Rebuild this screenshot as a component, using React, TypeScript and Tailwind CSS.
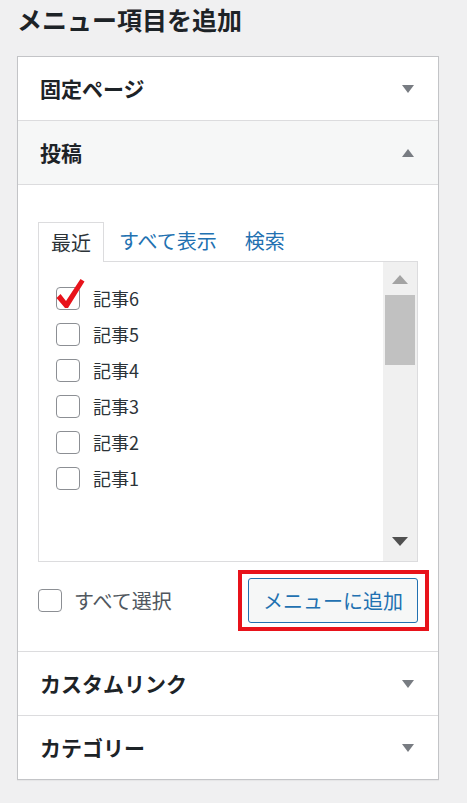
const jp = { fontFamily: '"Noto Sans CJK JP", "Noto Sans", sans-serif' };

const posts = ["記事6", "記事5", "記事4", "記事3", "記事2", "記事1"];

function Caret({ up = false }: { up?: boolean }) {
  return (
    <svg width="12" height="8" viewBox="0 0 12 8" aria-hidden="true">
      <path d={up ? "M0 8 L6 0 L12 8 Z" : "M0 0 L12 0 L6 8 Z"} fill="#787c82" />
    </svg>
  );
}

function SectionRow({ title, open = false }: { title: string; open?: boolean }) {
  return (
    <div
      className={`flex h-[64px] items-center justify-between border-b border-[#dcdcde] pl-[22px] pr-[24px] ${
        open ? "bg-[#f6f7f7]" : "bg-white"
      }`}
    >
      <span className="text-[21px] font-bold leading-none text-[#1d2327]">{title}</span>
      <Caret up={open} />
    </div>
  );
}

function Box() {
  return <span className="block h-[23px] w-[24px] shrink-0 rounded-[4px] border border-[#8c8f94] bg-white" />;
}

function RedCheck() {
  return (
    <svg
      className="absolute left-0 top-[-10px]"
      width="30"
      height="32"
      viewBox="0 0 30 32"
      aria-hidden="true"
    >
      <path d="M0.5 21 L4.5 17 L10 24 L24.5 2 L28.5 4.5 L12 31 L9 31 Z" fill="#e8131b" />
    </svg>
  );
}

export default function App() {
  return (
    <div className="min-h-screen bg-[#f0f0f1] px-[17px] pt-[6px]" style={jp}>
      <h2 className="text-[25px] font-bold leading-[26px] text-[#1d2327]">メニュー項目を追加</h2>

      <div className="mt-[24px] w-[422px] border border-[#c3c4c7] bg-white shadow-[0_1px_1px_rgba(0,0,0,0.04)]">
        <SectionRow title="固定ページ" />
        <SectionRow title="投稿" open />

        <div className="border-b border-[#dcdcde] px-[20px] pb-[28px] pt-[36px]">
          <div className="flex items-end">
            <div className="relative z-10 -mb-px flex h-[40px] w-[66px] items-center justify-center border border-b-0 border-[#dcdcde] bg-white text-[20px] text-[#2c3338]">
              最近
            </div>
            <span className="ml-[15px] flex h-[40px] items-center text-[20px] text-[#2271b1]">すべて表示</span>
            <span className="ml-[28px] flex h-[40px] items-center text-[20px] text-[#2271b1]">検索</span>
          </div>

          <div className="flex h-[301px] border border-[#dcdcde]">
            <ul className="flex-1 pl-[17px] pt-[18px]">
              {posts.map((post, i) => (
                <li key={post} className="flex h-[36px] items-center gap-[13px]">
                  <span className="relative">
                    <Box />
                    {i === 0 ? <RedCheck /> : null}
                  </span>
                  <span className="text-[18px] leading-none text-[#2c3338]">{post}</span>
                </li>
              ))}
            </ul>
            <div className="flex w-[34px] flex-col items-center bg-[#f0f0f0]">
              <svg className="mt-[13px]" width="16" height="9" viewBox="0 0 16 9" aria-hidden="true">
                <path d="M0 9 L8 0 L16 9 Z" fill="#a3a3a3" />
              </svg>
              <div className="mt-[11px] h-[70px] w-[30px] bg-[#c1c1c1]" />
              <svg className="mb-[15px] mt-auto" width="16" height="9" viewBox="0 0 16 9" aria-hidden="true">
                <path d="M0 0 L16 0 L8 9 Z" fill="#505050" />
              </svg>
            </div>
          </div>

          <div className="mt-[16px] flex items-center justify-between">
            <label className="flex items-center gap-[12px]">
              <Box />
              <span className="text-[20px] leading-none text-[#50575e]">すべて選択</span>
            </label>
            <div className="relative">
              <button
                type="button"
                className="h-[45px] w-[170px] rounded-[3px] border border-[#2271b1] bg-[#f6f7f7] text-[20px] leading-none text-[#2271b1]"
              >
                メニューに追加
              </button>
              <span className="pointer-events-none absolute bottom-[-8px] left-[-10px] right-[-11px] top-[-8px] border-4 border-[#e8131b]" />
            </div>
          </div>
        </div>

        <SectionRow title="カスタムリンク" />
        <div className="flex h-[63px] items-center justify-between pl-[22px] pr-[24px]">
          <span className="text-[21px] font-bold leading-none text-[#1d2327]">カテゴリー</span>
          <Caret />
        </div>
      </div>
    </div>
  );
}
